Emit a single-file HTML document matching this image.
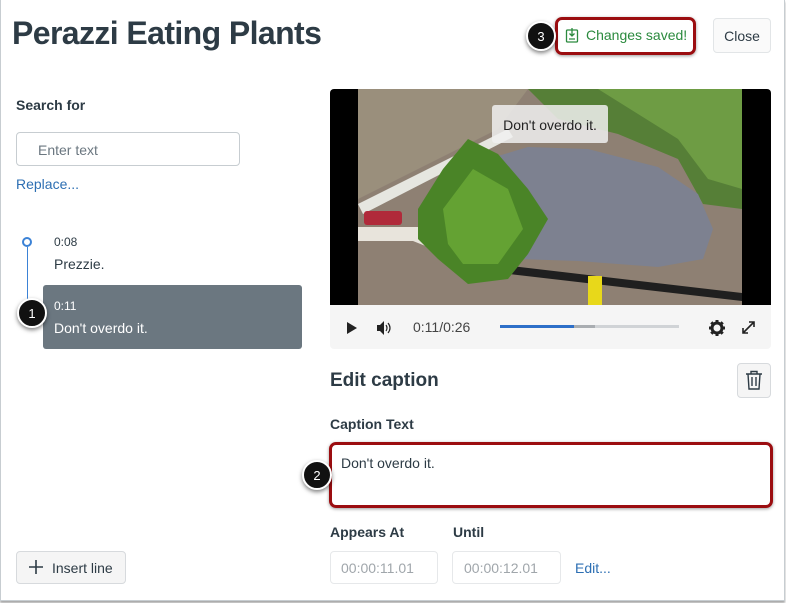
<!DOCTYPE html>
<html><head><meta charset="utf-8"><style>
*{box-sizing:border-box;margin:0;padding:0}
body{width:786px;height:603px;overflow:hidden;background:#fff;font-family:"Liberation Sans",sans-serif;color:#2d3b45;position:relative}
.a{position:absolute}
.frame{left:0;top:0;width:785px;height:601px;border:1px solid #c7cdd1;border-top:none;box-shadow:0 2px 2px rgba(0,0,0,.35)}
.badge{width:30px;height:30px;border-radius:50%;background:#111;color:#fff;font-size:13px;display:flex;align-items:center;justify-content:center;border:2px solid #fff;box-shadow:0 2px 4px rgba(0,0,0,.5)}
.lbl{font-size:14px;font-weight:bold;color:#2d3b45}
.inp{border:1px solid #c7cdd1;border-radius:4px;background:#fff}
</style></head><body>
<div class="a frame"></div>
<div class="a" style="left:12px;top:15px;font-size:32px;font-weight:bold;color:#2d3b45;letter-spacing:-0.6px">Perazzi Eating Plants</div>

<div class="a" style="left:555px;top:17px;width:141px;height:38px;border:3px solid #9b0d10;border-radius:7px;box-shadow:0 1px 3px rgba(0,0,0,.4)"></div>
<svg class="a" style="left:565px;top:27px" width="14" height="16" viewBox="0 0 14 16"><rect x="1.5" y="3" width="11" height="12" rx="1" fill="none" stroke="#2b8a3e" stroke-width="1.3"/><path d="M7 1v8M4.5 6.5 7 9l2.5-2.5M4 12h6" fill="none" stroke="#2b8a3e" stroke-width="1.3"/></svg>
<div class="a" style="left:586px;top:27px;font-size:14px;color:#2b8a3e">Changes saved!</div>
<div class="a badge" style="left:526px;top:21px">3</div>
<div class="a" style="left:713px;top:18px;width:58px;height:35px;border:1px solid #e2e5e7;border-radius:4px;background:#fafafa;font-size:14px;display:flex;align-items:center;justify-content:center">Close</div>

<div class="a lbl" style="left:16px;top:97px">Search for</div>
<div class="a inp" style="left:16px;top:132px;width:224px;height:34px"></div>
<div class="a" style="left:38px;top:142px;font-size:14px;color:#6b7780">Enter text</div>
<div class="a" style="left:16px;top:176px;font-size:14px;color:#2d6fb3">Replace...</div>

<div class="a" style="left:22px;top:237px;width:10px;height:10px;border:2px solid #3b82d6;border-radius:50%"></div>
<div class="a" style="left:26.5px;top:247px;width:1px;height:54px;background:#3b82d6"></div>
<div class="a" style="left:54px;top:235px;font-size:12px">0:08</div>
<div class="a" style="left:54px;top:256px;font-size:14px">Prezzie.</div>
<div class="a" style="left:43px;top:285px;width:259px;height:64px;background:#6b7780;border-radius:3px"></div>
<div class="a" style="left:54px;top:299px;font-size:12px;color:#fff">0:11</div>
<div class="a" style="left:54px;top:320px;font-size:14px;color:#fff">Don't overdo it.</div>
<div class="a badge" style="left:17px;top:298px">1</div>

<div class="a" style="left:330px;top:89px;width:441px;height:260px;background:#f5f5f5;border-radius:4px;overflow:hidden">
<svg width="441" height="216" viewBox="0 0 441 216">
<rect width="441" height="216" fill="#000"/>
<g transform="translate(28,0)">
<rect width="384" height="216" fill="#8e8073"/>
<path d="M0 0H170L140 40 0 110Z" fill="#9a8f7c"/>
<path d="M170 0H384V120L345 115 320 70 260 45 200 30Z" fill="#567f37"/>
<path d="M240 0H384V100L350 90 320 50 280 25Z" fill="#6e9c44"/>
<path d="M0 115 150 40 155 48 5 125Z" fill="#e6e6e0"/>
<path d="M0 138H60L95 158 90 166 55 152H0Z" fill="#e8e4dc"/>
<rect x="6" y="122" width="38" height="14" rx="3" fill="#b02a3a"/>
<path d="M110 172 384 204 384 212 108 180Z" fill="#1f1f1f"/>
<path d="M130 70 170 58 230 60 300 78 340 105 355 140 345 170 300 178 220 172 160 170 140 140 125 100Z" fill="#7d8190"/>
<path d="M60 120 85 80 110 50 140 65 170 100 190 130 170 165 150 190 110 195 80 170 60 150Z" fill="#4a8427"/>
<path d="M85 120 115 80 150 100 165 140 140 175 105 175 90 155Z" fill="#64a233"/>
<rect x="230" y="187" width="14" height="29" fill="#e8d81a"/>
<rect x="134" y="16" width="116" height="38" rx="3" fill="rgba(240,240,240,.85)"/>
<text x="192" y="41" text-anchor="middle" font-family="Liberation Sans" font-size="14" fill="#222">Don't overdo it.</text>
</g>
</svg>
<svg class="a" style="left:16px;top:232px" width="12" height="14"><path d="M1 1 11 7 1 13Z" fill="#222"/></svg>
<svg class="a" style="left:46px;top:231px" width="16" height="16"><path d="M1 5h3l4-4v14l-4-4H1Z" fill="#222"/><path d="M10 5q2 3 0 6M12 3q4 5 0 10" fill="none" stroke="#222" stroke-width="1.2"/></svg>
<div class="a" style="left:83px;top:230px;font-size:14px;color:#444">0:11/0:26</div>
<div class="a" style="left:170px;top:236px;width:179px;height:3px;background:#d0d3d6"></div>
<div class="a" style="left:170px;top:236px;width:95px;height:3px;background:#a9adb1"></div>
<div class="a" style="left:170px;top:236px;width:74px;height:3px;background:#2d6fc8"></div>
<svg class="a" style="left:379px;top:231px" width="16" height="16" viewBox="0 0 16 16"><circle cx="8" cy="8" r="5" fill="none" stroke="#222" stroke-width="3"/><g stroke="#222" stroke-width="3"><path d="M8 0v3M8 13v3M0 8h3M13 8h3M2.3 2.3l2 2M11.7 11.7l2 2M2.3 13.7l2-2M11.7 4.3l2-2"/></g></svg>
<svg class="a" style="left:411px;top:231px" width="15" height="15"><path d="M2 13 13 2M8 2h5v5M2 8v5h5" fill="none" stroke="#222" stroke-width="1.6"/></svg>
</div>

<div class="a" style="left:330px;top:370px;font-size:19px;font-weight:bold">Edit caption</div>
<div class="a" style="left:737px;top:363px;width:34px;height:35px;border:1px solid #d7dadd;border-radius:4px;background:#f5f5f5"></div>
<svg class="a" style="left:745px;top:370px" width="18" height="20" viewBox="0 0 18 20"><path d="M1 4h16M6 4V1.5h6V4M3 4l1 15h10l1-15M7 7v9M11 7v9" fill="none" stroke="#2d3b45" stroke-width="1.4"/></svg>

<div class="a lbl" style="left:330px;top:416px">Caption Text</div>
<div class="a" style="left:329px;top:442px;width:444px;height:66px;border:3px solid #9b0d10;border-radius:7px;box-shadow:0 1px 3px rgba(0,0,0,.4)"></div>
<div class="a" style="left:341px;top:455px;font-size:14px">Don't overdo it.</div>
<div class="a badge" style="left:302px;top:460px">2</div>

<div class="a lbl" style="left:330px;top:524px">Appears At</div>
<div class="a lbl" style="left:453px;top:524px">Until</div>
<div class="a inp" style="left:330px;top:551px;width:108px;height:33px;border-color:#e6e8ea"></div>
<div class="a" style="left:341px;top:560px;font-size:14px;color:#a0a6ab">00:00:11.01</div>
<div class="a inp" style="left:452px;top:551px;width:109px;height:33px;border-color:#e6e8ea"></div>
<div class="a" style="left:464px;top:560px;font-size:14px;color:#a0a6ab">00:00:12.01</div>
<div class="a" style="left:575px;top:560px;font-size:14px;color:#2d6fb3">Edit...</div>

<div class="a" style="left:16px;top:551px;width:110px;height:33px;border:1px solid #d7dadd;border-radius:4px;background:#f5f5f5"></div>
<svg class="a" style="left:29px;top:560px" width="14" height="14"><path d="M7 0v14M0 7h14" stroke="#2d3b45" stroke-width="1.6"/></svg>
<div class="a" style="left:52px;top:560px;font-size:14px">Insert line</div>
</body></html>
